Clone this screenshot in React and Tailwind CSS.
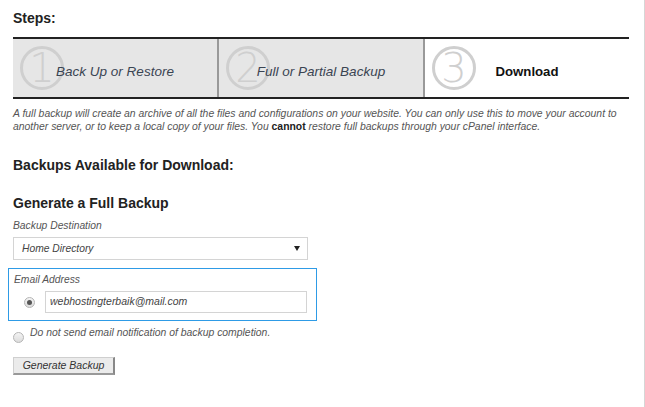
const steps = [
  { n: "1", label: "Back Up or Restore", active: false },
  { n: "2", label: "Full or Partial Backup", active: false },
  { n: "3", label: "Download", active: true },
];

const StepCircle = ({ n }) => (
  <svg width="46" height="46" viewBox="0 0 46 46">
    <circle cx="23" cy="23" r="20.5" fill="none" stroke="#cfcfcf" strokeWidth="3" />
    <text
      x="23"
      y="37"
      textAnchor="middle"
      fontSize="40"
      fontWeight="200"
      fontFamily="'DejaVu Sans', 'Liberation Sans', sans-serif"
      fill="#cfcfcf"
    >
      {n}
    </text>
  </svg>
);

const Radio = ({ checked }) => (
  <span className="w-[11px] h-[11px] rounded-full border border-[#b5b5b5] bg-gradient-to-b from-[#f4f4f4] to-[#dcdcdc] flex items-center justify-center shrink-0">
    {checked && <span className="w-[5px] h-[5px] rounded-full bg-[#555]" />}
  </span>
);

export default function App() {
  return (
    <div className="w-[645px] h-[407px] bg-white border-r border-[#d6d6d6] font-['Liberation_Sans',Arial,sans-serif] text-[#333] overflow-hidden">
      <div className="pl-[13px] pr-[15px] pt-[10px]">
        <h2 className="text-[14px] font-bold text-[#222] leading-[16px]">Steps:</h2>

        {/* steps bar */}
        <div className="mt-[11px] flex border-t-2 border-b-2 border-[#222] h-[62px]">
          {steps.map((s, i) => (
            <div
              key={s.n}
              className={`relative flex-1 flex items-center justify-center ${i > 0 ? "border-l-2 border-[#999]" : ""} ${s.active ? "bg-white" : "bg-[#e6e6e6]"}`}
            >
              <div className="absolute left-[6px] top-[6px]">
                <StepCircle n={s.n} />
              </div>
              {s.active ? (
                <span className="relative text-[13.2px] font-bold text-[#111] mt-[8px]">{s.label}</span>
              ) : (
                <span className="relative text-[13.5px] italic text-[#3a4452] mt-[8px]">{s.label}</span>
              )}
            </div>
          ))}
        </div>

        <p className="mt-[8px] text-[10.4px] italic leading-[13px] text-[#555]">
          A full backup will create an archive of all the files and configurations on your website. You can only use this to move your account to another server, or to keep a local copy of your files. You{" "}
          <b className="not-italic text-[#222]">cannot</b> restore full backups through your cPanel interface.
        </p>

        <h3 className="mt-[24px] text-[14px] font-bold text-[#222] leading-[16px]">Backups Available for Download:</h3>

        <h3 className="mt-[22px] text-[14px] font-bold text-[#222] leading-[16px]">Generate a Full Backup</h3>

        <div className="mt-[8px] text-[10.3px] italic text-[#555] leading-[13px]">Backup Destination</div>
        <div className="mt-[5px] w-[295px] h-[23px] border border-[#d4d4d4] flex items-center justify-between pl-[8px] pr-[7px]">
          <span className="text-[10.3px] italic text-[#444]">Home Directory</span>
          <svg width="6" height="5" viewBox="0 0 6 5">
            <path d="M0 0 L6 0 L3 5 Z" fill="#222" />
          </svg>
        </div>
      </div>

      <div className="ml-[8px] mt-[8px] w-[309px] border-[1.5px] border-[#2e9be6] pl-[5px] pt-[4px] pb-[7px]">
        <div className="text-[10.3px] italic text-[#555] leading-[13px]">Email Address</div>
        <div className="mt-[5px] flex items-center">
          <span className="ml-[10px]">
            <Radio checked />
          </span>
          <div className="ml-[10px] w-[262px] h-[22px] border border-[#d4d4d4] flex items-center pl-[4px]">
            <span className="text-[10.5px] italic text-[#444]">webhostingterbaik@mail.com</span>
          </div>
        </div>
      </div>

      <div className="pl-[13px]">
        <div className="mt-[5px] flex items-start">
          <span className="mt-[6px]">
            <Radio />
          </span>
          <span className="ml-[6px] text-[10.4px] italic text-[#555] leading-[13px]">
            Do not send email notification of backup completion.
          </span>
        </div>

        <button className="mt-[14px] w-[102px] h-[18px] bg-[#ebebeb] border border-[#cfcfcf] border-r-2 border-b-2 border-r-[#888] border-b-[#999] text-[10.5px] italic text-[#333] leading-none">
          Generate Backup
        </button>
      </div>
    </div>
  );
}
